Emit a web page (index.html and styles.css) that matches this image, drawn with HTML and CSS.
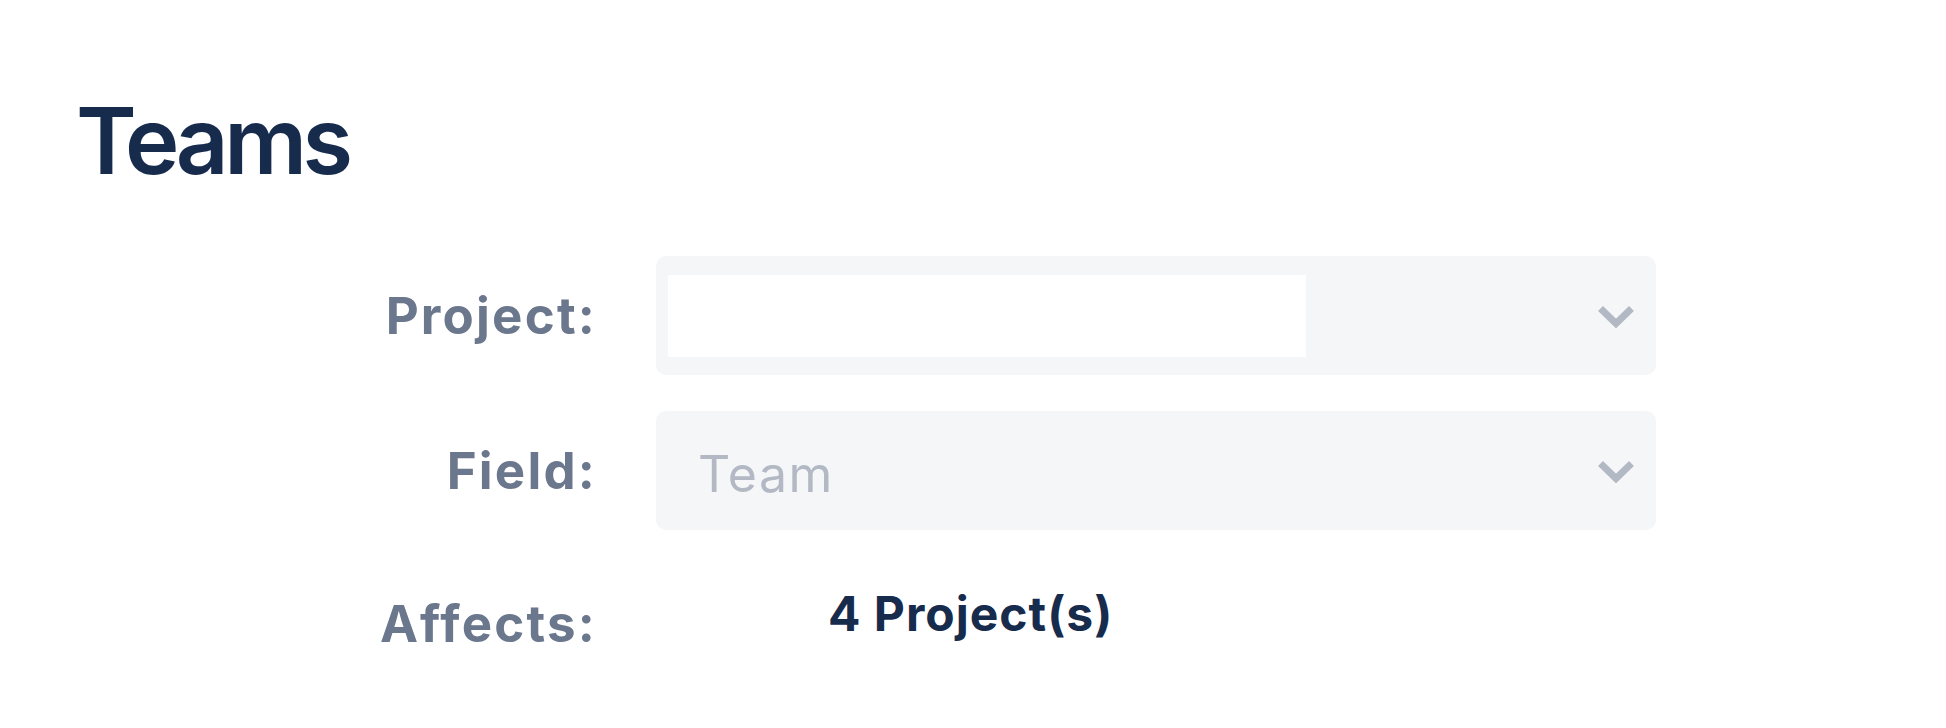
FILE: index.html
```html
<!DOCTYPE html>
<html lang="en">
<head>
<meta charset="utf-8">
<title>Teams</title>
<link rel="stylesheet" href="styles.css">
</head>
<body>
<main class="page">
  <h1 class="title">Teams</h1>
  <div class="form">
    <div class="label">Project:</div>
    <div class="select">
      <div class="select-input"></div>
      <svg class="chevron" viewBox="0 0 38 24" width="38" height="24" aria-hidden="true"><polyline points="3.5,4.5 19,19.5 34.5,4.5"/></svg>
    </div>

    <div class="label">Field:</div>
    <div class="select">
      <div class="placeholder">Team</div>
      <svg class="chevron" viewBox="0 0 38 24" width="38" height="24" aria-hidden="true"><polyline points="3.5,4.5 19,19.5 34.5,4.5"/></svg>
    </div>

    <div class="label label-top">Affects:</div>
    <div class="value">4 Project(s)</div>
  </div>
</main>
</body>
</html>
```
FILE: styles.css
```css
html, body {
  margin: 0;
  padding: 0;
  background: #ffffff;
}

body {
  font-family: Inter, "Noto Sans", "Liberation Sans", sans-serif;
  color: #172B4D;
}

.page {
  padding: 86px 0 0 76px;
}

.title {
  margin: 0 0 60px 0;
  font-size: 92px;
  font-weight: 600;
  line-height: 110px;
  color: #172B4D;
  letter-spacing: -4.5px;
}

.form {
  display: grid;
  grid-template-columns: 300px 1000px;
  column-gap: 64px;
  row-gap: 36px;
  margin-left: 216px;
  align-items: center;
}

.label {
  margin-right: -5px;
  text-align: right;
  font-size: 51px;
  font-weight: 700;
  line-height: 60px;
  letter-spacing: 2.2px;
  color: #6B778C;
}

.label-top {
  align-self: start;
  margin-top: 28px;
}

.select {
  height: 119px;
  box-sizing: border-box;
  background: #F5F6F8;
  border-radius: 10px;
  display: flex;
  align-items: center;
  justify-content: space-between;
  padding: 0 21px 0 12px;
}

.select-input {
  width: 638px;
  height: 82px;
  background: #ffffff;
}

.placeholder {
  padding: 6px 0 0 30px;
  font-size: 50px;
  font-weight: 400;
  line-height: 60px;
  letter-spacing: 1.5px;
  color: #B3B9C4;
}

.chevron {
  display: block;
  fill: none;
  stroke: #B3B9C4;
  stroke-width: 7;
  stroke-linecap: butt;
  stroke-linejoin: miter;
}

.value {
  align-self: start;
  margin-top: 18px;
  padding-left: 172px;
  font-size: 48px;
  font-weight: 700;
  line-height: 60px;
  letter-spacing: 1px;
  color: #172B4D;
}
```
